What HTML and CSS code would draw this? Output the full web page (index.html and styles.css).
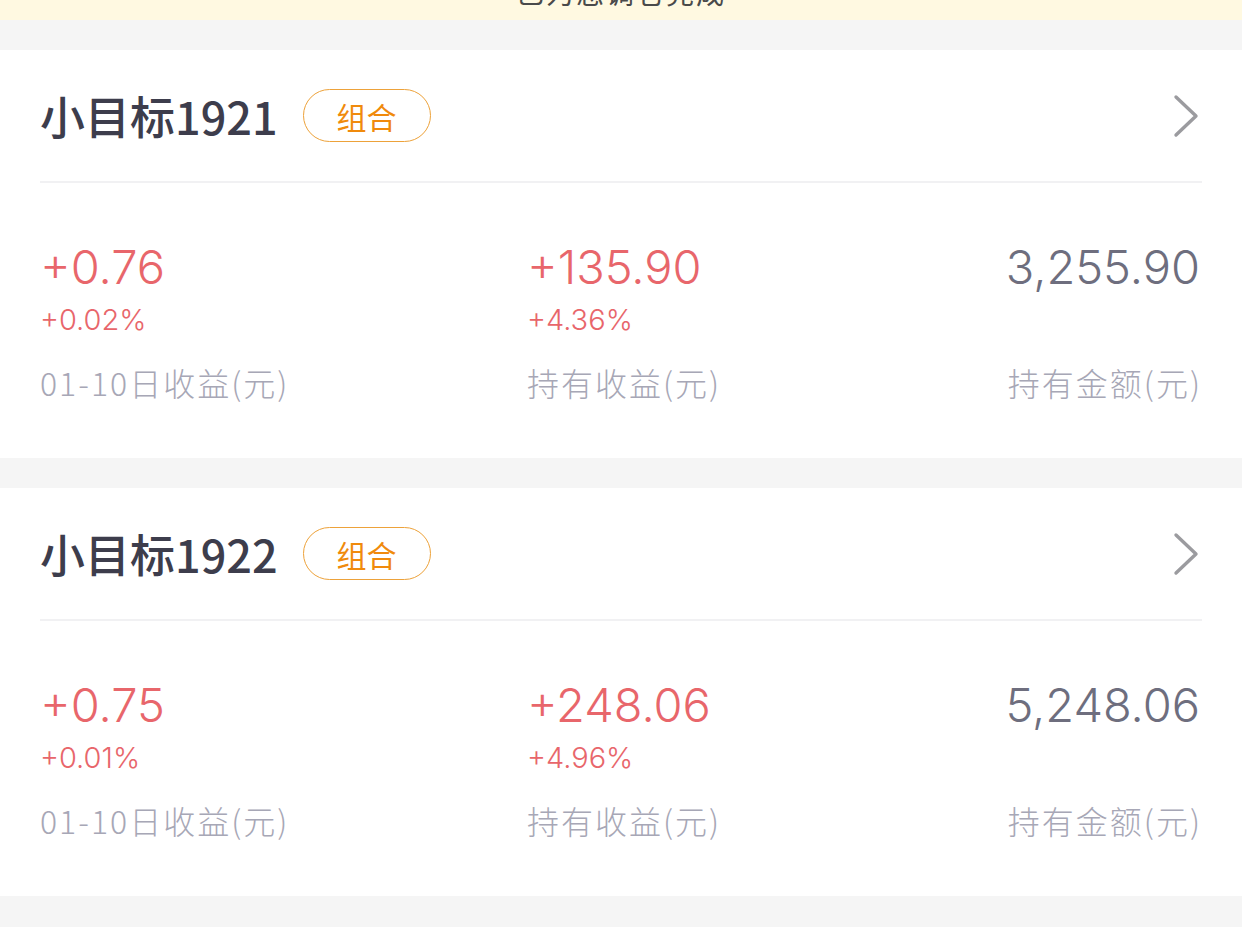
FILE: index.html
```html
<!DOCTYPE html>
<html lang="zh-CN">
<head>
    <meta charset="UTF-8">
    <meta name="viewport" content="width=device-width, initial-scale=1.0">
    <title>我的组合</title>
    <link rel="stylesheet" href="styles.css">
</head>
<body>
    <div class="notice">
        <div class="notice-text">已为您调仓完成</div>
    </div>

    <div class="card">
        <div class="card-head">
            <div class="card-title">小目标1921</div>
            <div class="tag">组合</div>
            <svg class="arrow" width="26" height="44" viewBox="0 0 26 44">
                <path d="M3 3 L23 22 L3 41" fill="none" stroke="#9b9b9f" stroke-width="3.4" stroke-linecap="round" stroke-linejoin="round"/>
            </svg>
        </div>
        <div class="card-body">
            <div class="col">
                <div class="amount up">+0.76</div>
                <div class="rate up">+0.02%</div>
                <div class="label">01-10日收益(元)</div>
            </div>
            <div class="col">
                <div class="amount up">+135.90</div>
                <div class="rate up">+4.36%</div>
                <div class="label">持有收益(元)</div>
            </div>
            <div class="col col-right">
                <div class="amount">3,255.90</div>
                <div class="rate">&nbsp;</div>
                <div class="label">持有金额(元)</div>
            </div>
        </div>
    </div>

    <div class="card">
        <div class="card-head">
            <div class="card-title">小目标1922</div>
            <div class="tag">组合</div>
            <svg class="arrow" width="26" height="44" viewBox="0 0 26 44">
                <path d="M3 3 L23 22 L3 41" fill="none" stroke="#9b9b9f" stroke-width="3.4" stroke-linecap="round" stroke-linejoin="round"/>
            </svg>
        </div>
        <div class="card-body">
            <div class="col">
                <div class="amount up">+0.75</div>
                <div class="rate up">+0.01%</div>
                <div class="label">01-10日收益(元)</div>
            </div>
            <div class="col">
                <div class="amount up">+248.06</div>
                <div class="rate up">+4.96%</div>
                <div class="label">持有收益(元)</div>
            </div>
            <div class="col col-right">
                <div class="amount">5,248.06</div>
                <div class="rate">&nbsp;</div>
                <div class="label">持有金额(元)</div>
            </div>
        </div>
    </div>
</body>
</html>
```

FILE: styles.css
```css
* {
    margin: 0;
    padding: 0;
    box-sizing: border-box;
}

body {
    font-family: Inter, 'Noto Sans CJK SC', sans-serif;
    background: #f5f5f5;
    color: #3c3c4a;
    overflow: hidden;
    height: 100vh;
}

.notice {
    height: 20px;
    background: #fff9e1;
    overflow: hidden;
    display: flex;
    justify-content: center;
}

.notice-text {
    font-family: 'Noto Sans CJK SC', sans-serif;
    font-size: 28px;
    line-height: 40px;
    margin-top: -28px;
    letter-spacing: 2px;
    color: #4a4a4a;
}

.card {
    background: #fff;
    margin-top: 30px;
    padding: 0 40px;
}

.card-head {
    height: 133px;
    display: flex;
    align-items: center;
    border-bottom: 2px solid #f1f1f3;
}

.card-title {
    font-family: 'Noto Sans CJK SC', sans-serif;
    font-size: 45px;
    font-weight: 500;
    color: #3d3d4c;
}

.tag {
    margin-left: 25px;
    height: 53px;
    padding: 0 33px;
    border: 1px solid #eda23a;
    border-radius: 27px;
    color: #f08a0c;
    font-family: 'Noto Sans CJK SC', sans-serif;
    font-size: 30px;
    display: flex;
    align-items: center;
}

.arrow {
    margin-left: auto;
    margin-right: 3px;
}

.card-body {
    display: grid;
    grid-template-columns: 487px 1fr auto;
    padding: 56px 2px 56px 0;
}

.col {
    display: flex;
    flex-direction: column;
}

.col-right {
    align-items: flex-end;
}

.amount {
    font-size: 47px;
    line-height: 56px;
    font-weight: 300;
    color: #6e6e7e;
}

.rate {
    font-size: 29px;
    line-height: 34px;
    margin-top: 8px;
    font-weight: 300;
}

.up {
    color: #e8666b;
}

.label {
    font-family: 'Noto Sans CJK SC', sans-serif;
    font-size: 32px;
    line-height: 40px;
    margin-top: 25px;
    letter-spacing: 2px;
    color: #a7a7b6;
    font-weight: 300;
}

.col-right .label {
    margin-right: -2px;
}
```
